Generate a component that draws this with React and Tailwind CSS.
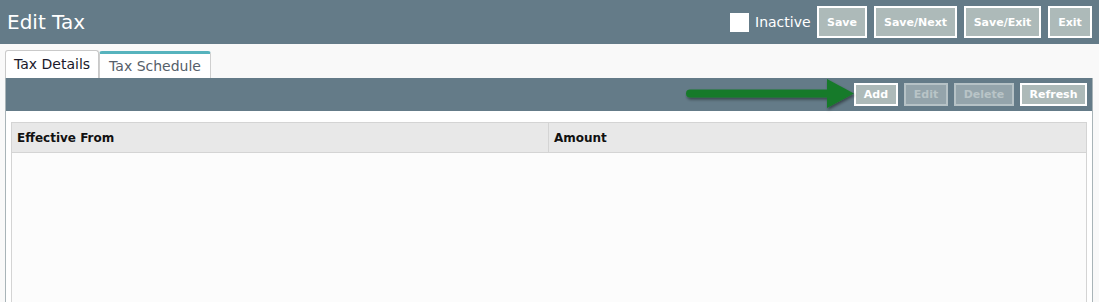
import React from 'react'

const HeaderButton = ({ children, w }) => (
  <button className={`${w} h-[32px] flex items-center justify-center border-2 border-white bg-[#adbab9] text-white text-[11px] font-bold leading-none`}>
    {children}
  </button>
)

const ToolButton = ({ children, disabled, w }) => (
  <button
    className={
      disabled
        ? `${w} h-[23px] flex items-center justify-center border-2 border-[#b6c2c6] bg-[#94a4ab] text-[#b9c4c7] text-[11px] font-bold leading-none`
        : `${w} h-[23px] flex items-center justify-center border-2 border-white bg-[#adbab9] text-white text-[11px] font-bold leading-none`
    }
  >
    {children}
  </button>
)

const Arrow = () => (
  <svg width="172" height="36" viewBox="0 0 172 36" className="absolute left-[-169px] top-[-5px]">
    <defs>
      <filter id="sh" x="-10%" y="-50%" width="120%" height="200%">
        <feDropShadow dx="1" dy="2" stdDeviation="1.5" floodColor="#000" floodOpacity="0.45" />
      </filter>
    </defs>
    <g filter="url(#sh)">
      <path d="M5 11.5 L142 11.5 L142 1 L169 15.5 L142 30 L142 19.5 L5 19.5 A4 4 0 0 1 5 11.5 Z" fill="#177a29" />
    </g>
  </svg>
)

export default function App() {
  return (
    <div className="w-[1099px] h-[302px] overflow-hidden bg-[#f9f9f9] font-['DejaVu_Sans',Verdana,sans-serif]">
      <div className="h-[44px] bg-[#647b88] flex items-center justify-between pl-[7px] pr-[7px]">
        <h1 className="text-white text-[20px] leading-none">Edit Tax</h1>
        <div className="flex items-center">
          <div className="w-[19px] h-[19px] bg-white mr-[6px]" />
          <span className="w-[56px] whitespace-nowrap text-white text-[14px] mr-[6px]">Inactive</span>
          <div className="flex gap-[7px]">
            <HeaderButton w="w-[50px]">Save</HeaderButton>
            <HeaderButton w="w-[83px]">Save/Next</HeaderButton>
            <HeaderButton w="w-[77px]">Save/Exit</HeaderButton>
            <HeaderButton w="w-[44px]">Exit</HeaderButton>
          </div>
        </div>
      </div>

      <div className="pl-[5px] pr-[6px] pt-[6px]">
        <div className="flex items-end">
          <div className="h-[28px] px-[8px] flex items-center bg-white border border-b-0 border-[#c9c9c9] rounded-t-[3px] text-[14px] text-[#1a1a2a]">
            Tax Details
          </div>
          <div className="h-[27px] px-[9px] flex items-center bg-white border-t-[3px] border-t-[#56b3bd] border-x border-x-[#cfcfcf] rounded-t-[3px] text-[14px] text-[#55606a]">
            Tax Schedule
          </div>
        </div>
        <div className="border border-[#a9b4b8] border-t-0 h-[230px] flex flex-col">
          <div className="h-[33px] bg-[#647b88] flex items-center justify-end pr-[5px] gap-[6px]">
            <div className="relative">
              <Arrow />
              <ToolButton w="w-[44px]">Add</ToolButton>
            </div>
            <ToolButton disabled w="w-[44px]">Edit</ToolButton>
            <ToolButton disabled w="w-[60px]">Delete</ToolButton>
            <ToolButton w="w-[67px]">Refresh</ToolButton>
          </div>
          <div className="flex-1 bg-white px-[5px] pt-[11px]">
            <div className="h-full border border-[#d4d4d4] border-b-0 bg-[#fcfcfc]">
              <div className="h-[30px] bg-[#e8e8e8] border-b border-[#d4d4d4] flex text-[12px] font-bold text-[#111]">
                <div className="w-[537px] border-r border-[#d4d4d4] flex items-center pl-[5px]">Effective From</div>
                <div className="flex-1 flex items-center pl-[5px]">Amount</div>
              </div>
            </div>
          </div>
        </div>
      </div>
    </div>
  )
}
